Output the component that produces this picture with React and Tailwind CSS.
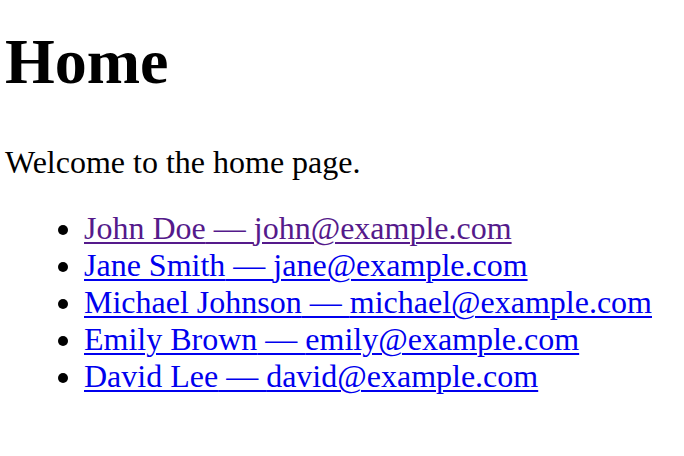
export default function App() {
  const people = [
    ["John Doe", "john@example.com", true],
    ["Jane Smith", "jane@example.com", false],
    ["Michael Johnson", "michael@example.com", false],
    ["Emily Brown", "emily@example.com", false],
    ["David Lee", "david@example.com", false],
  ];
  return (
    <div className="w-[684px] h-[456px] bg-white text-black pl-[5px] pt-[25px]" style={{ fontFamily: '"Liberation Serif", "Times New Roman", serif' }}>
      <h1 className="text-[64px] leading-[74px] font-bold m-0">Home</h1>
      <p className="text-[32px] leading-[37px] mt-[45px]">Welcome to the home page.</p>
      <ul className="list-disc pl-[79px] mt-[29px] text-[32px] leading-[37px]">
        {people.map(([n, e, v]) => (
          <li key={n}>
            <a href="#" className={`underline decoration-2 underline-offset-[3px] ${v ? "text-[#551a8b]" : "text-[#0000ee]"}`}>
              {n} — {e}
            </a>
          </li>
        ))}
      </ul>
    </div>
  );
}
